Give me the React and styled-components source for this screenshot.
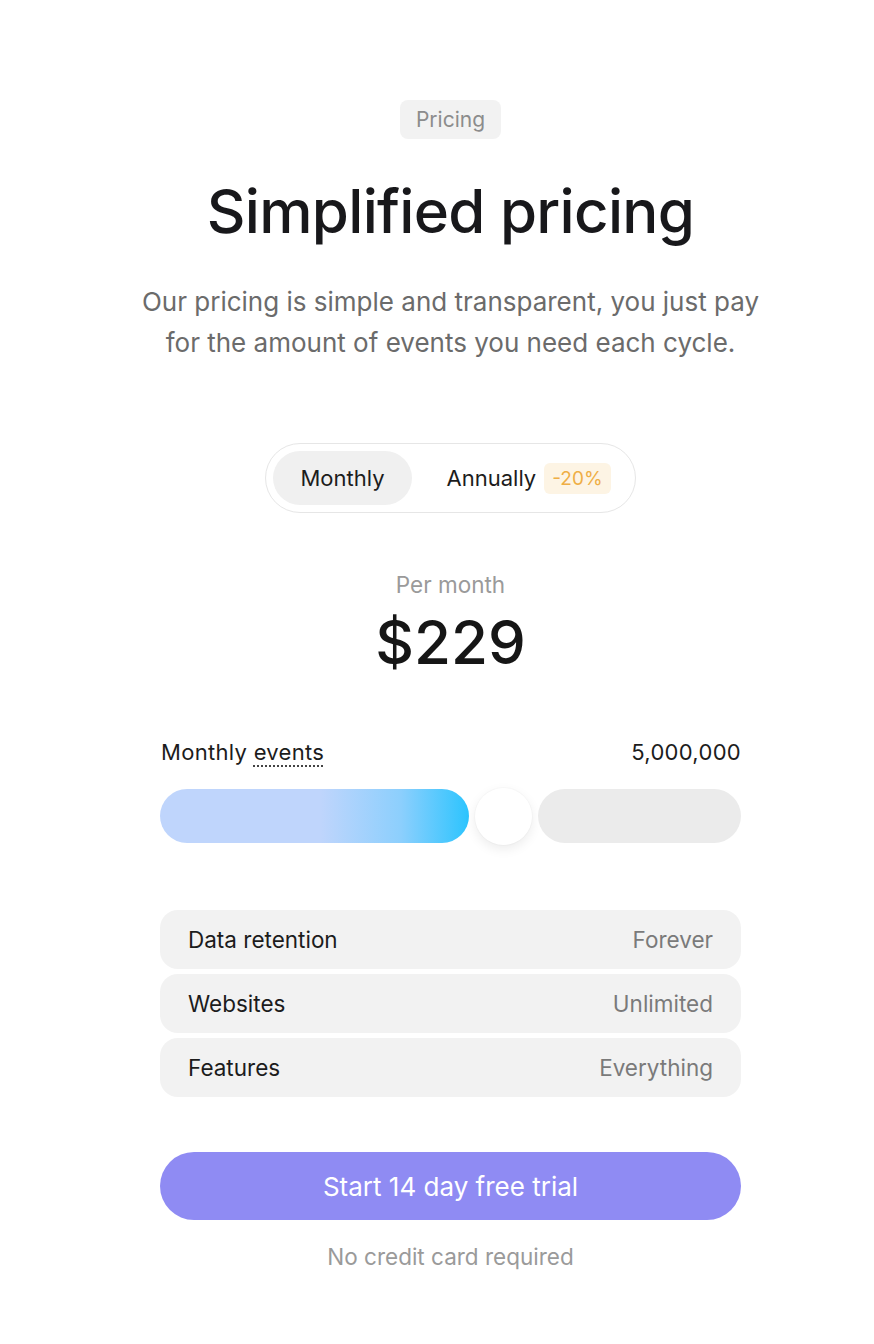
import React from "react";
import styled, { createGlobalStyle } from "styled-components";

const Global = createGlobalStyle`
  html, body { margin: 0; padding: 0; background: #ffffff; }
  body { font-family: Inter, "Noto Sans", "Liberation Sans", sans-serif; -webkit-font-smoothing: antialiased; }
  * { box-sizing: border-box; }
`;

const Page = styled.main`
  width: 874px;
  min-height: 1344px;
  padding: 100px 133px 0 160px;
  display: flex;
  flex-direction: column;
  align-items: center;
`;

const Eyebrow = styled.span`
  display: inline-flex;
  align-items: center;
  height: 39px;
  padding: 0 16px;
  border-radius: 8px;
  background: #f2f2f2;
  color: #8c8c8c;
  font-size: 21px;
  font-weight: 400;
`;

const Title = styled.h1`
  margin: 36px 0 0;
  font-size: 60px;
  line-height: 72px;
  font-weight: 500;
  letter-spacing: -0.7px;
  color: #18181b;
`;

const Lead = styled.p`
  margin: 34px 0 0;
  width: 630px;
  text-align: center;
  font-size: 26px;
  line-height: 41px;
  color: #6b6b6b;
`;

const Toggle = styled.div`
  margin-top: 80px;
  display: flex;
  align-items: center;
  padding: 7px;
  border: 1.5px solid #e6e6e6;
  border-radius: 999px;
  height: 70px;
`;

const Option = styled.button`
  all: unset;
  display: flex;
  align-items: center;
  gap: 8px;
  height: 54px;
  padding: ${(p) => (p.$active ? "0 27px" : "0 17px 0 35px")};
  border-radius: 999px;
  background: ${(p) => (p.$active ? "#f0f0f0" : "transparent")};
  color: #1c1c1c;
  font-size: 22px;
  cursor: pointer;
`;

const Discount = styled.span`
  display: inline-flex;
  align-items: center;
  height: 31px;
  padding: 0 8px;
  border-radius: 6px;
  background: #fdf4e4;
  color: #efae45;
  font-size: 19px;
`;

const PriceLabel = styled.div`
  margin-top: 58px;
  font-size: 22.5px;
  line-height: 28px;
  color: #9a9a9a;
`;

const Price = styled.div`
  margin-top: 7px;
  font-size: 60px;
  line-height: 72px;
  font-weight: 500;
  color: #161616;
`;

const Slider = styled.section`
  align-self: stretch;
  margin-top: 60px;
  display: flex;
  flex-direction: column;
  gap: 22px;
`;

const SliderHead = styled.div`
  display: flex;
  justify-content: space-between;
  align-items: baseline;
  font-size: 22px;
  letter-spacing: 0.3px;
  line-height: 28px;
  color: #1c1c1c;
  padding-left: 1px;
`;

const Hint = styled.span`
  text-decoration: underline dotted #444;
  text-decoration-thickness: 2px;
  text-underline-offset: 5px;
`;

const Track = styled.div`
  display: flex;
  align-items: center;
  gap: 6px;
  height: 56px;
`;

const Fill = styled.div`
  height: 54px;
  border-radius: 999px;
  background: linear-gradient(90deg, #bfd5fc 0%, #bfd5fc 52%, #8ccffd 78%, #2cc4fe 100%);
`;

const Thumb = styled.div`
  flex: none;
  width: 57px;
  height: 57px;
  border-radius: 50%;
  background: #ffffff;
  box-shadow: 0 4px 12px rgba(0, 0, 0, 0.08), 0 0 0 1px rgba(0, 0, 0, 0.02);
`;

const Rest = styled.div`
  flex: 1;
  height: 54px;
  border-radius: 999px;
  background: #ebebeb;
`;

const Specs = styled.ul`
  align-self: stretch;
  list-style: none;
  margin: 66px 0 0;
  padding: 0;
  display: flex;
  flex-direction: column;
  gap: 5px;
`;

const Spec = styled.li`
  display: flex;
  justify-content: space-between;
  align-items: center;
  height: 59px;
  padding: 0 28px;
  border-radius: 18px;
  background: #f2f2f2;
  font-size: 22.5px;
`;

const SpecName = styled.span`
  color: #1c1c1c;
`;

const SpecValue = styled.span`
  color: #7a7a7a;
`;

const Cta = styled.button`
  all: unset;
  align-self: stretch;
  margin-top: 55px;
  height: 68px;
  border-radius: 999px;
  background: #8f8bf3;
  color: #ffffff;
  font-size: 26px;
  display: flex;
  align-items: center;
  justify-content: center;
  cursor: pointer;
`;

const Note = styled.p`
  margin: 22px 0 0;
  font-size: 22.5px;
  line-height: 30px;
  color: #9a9a9a;
`;

const specs = [
  ["Data retention", "Forever"],
  ["Websites", "Unlimited"],
  ["Features", "Everything"],
];

export default function App() {
  const fillWidth = 309;
  return (
    <>
      <Global />
      <Page>
        <Eyebrow>Pricing</Eyebrow>
        <Title>Simplified pricing</Title>
        <Lead>
          Our pricing is simple and transparent, you just pay for the amount of events you need each cycle.
        </Lead>
        <Toggle>
          <Option $active>Monthly</Option>
          <Option>
            Annually <Discount>-20%</Discount>
          </Option>
        </Toggle>
        <PriceLabel>Per month</PriceLabel>
        <Price>$229</Price>
        <Slider>
          <SliderHead>
            <span>
              Monthly <Hint>events</Hint>
            </span>
            <span>5,000,000</span>
          </SliderHead>
          <Track>
            <Fill style={{ width: fillWidth }} />
            <Thumb />
            <Rest />
          </Track>
        </Slider>
        <Specs>
          {specs.map(([name, value]) => (
            <Spec key={name}>
              <SpecName>{name}</SpecName>
              <SpecValue>{value}</SpecValue>
            </Spec>
          ))}
        </Specs>
        <Cta>Start 14 day free trial</Cta>
        <Note>No credit card required</Note>
      </Page>
    </>
  );
}
